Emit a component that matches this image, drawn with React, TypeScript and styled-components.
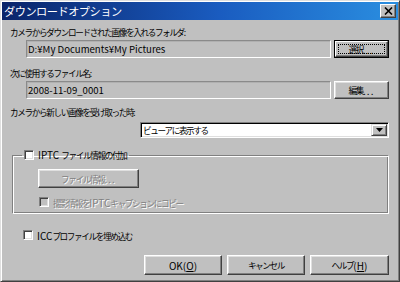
import React from "react";
import styled, { createGlobalStyle } from "styled-components";

const Global = createGlobalStyle`
  html, body { margin: 0; padding: 0; background: #c0c0c0; }
  body {
    font-family: "Noto Sans CJK JP", "Noto Sans", sans-serif;
    font-size: 8.6px;
    letter-spacing: -1.35px;
    color: #000;
  }
  * { box-sizing: border-box; }
`;

const Latin = styled.span<{ $ls?: number }>`
  font-size: 10px;
  letter-spacing: ${(p) => p.$ls ?? 0}px;
`;

const Window = styled.div`
  width: 400px;
  height: 282px;
  background: #c0c0c0;
  border: 1px solid;
  border-color: #dfdfdf #404040 #404040 #dfdfdf;
  box-shadow: inset 1px 1px #fff, inset -1px -1px #808080;
  padding: 1px;
  display: flex;
  flex-direction: column;
`;

const TitleBar = styled.div`
  height: 18px;
  background: linear-gradient(to right, #0a246a 0%, #1a5cc0 55%, #2a8ee0 100%);
  display: flex;
  align-items: center;
  justify-content: space-between;
  padding: 0 2px 0 2px;
`;

const TitleText = styled.span`
  color: #fff;
  font-size: 11.2px;
  letter-spacing: -0.5px;
  line-height: 18px;
`;

const CloseButton = styled.div`
  width: 16px;
  height: 14px;
  background: #c0c0c0;
  border: 1px solid;
  border-color: #fff #404040 #404040 #fff;
  box-shadow: inset -1px -1px #808080;
  display: flex;
  align-items: center;
  justify-content: center;
`;

const Body = styled.div`
  flex: 1;
  display: flex;
  flex-direction: column;
  padding: 6px 9px 0 8px;
`;

const Label = styled.div<{ $mt?: number }>`
  height: 12px;
  line-height: 12px;
  margin-top: ${(p) => p.$mt ?? 0}px;
  white-space: nowrap;
`;

const Row = styled.div<{ $mt?: number; $indent?: number; $h?: number }>`
  display: flex;
  align-items: stretch;
  margin-top: ${(p) => p.$mt ?? 0}px;
  padding-left: ${(p) => p.$indent ?? 16}px;
  gap: 3px;
  height: ${(p) => p.$h ?? 18}px;
`;

const Field = styled.div`
  flex: 1;
  background: #c0c0c0;
  border: 1px solid;
  border-color: #8a8a8a #fff #fff #8a8a8a;
  box-shadow: inset 1px 1px #b0b0b0;
  display: flex;
  align-items: center;
  padding-left: 1px;
  white-space: nowrap;
  font-size: 9.6px;
  letter-spacing: 0;
`;

const Button = styled.div<{ $w: number; $disabled?: boolean }>`
  width: ${(p) => p.$w}px;
  flex: none;
  background: #c0c0c0;
  border: 1px solid;
  border-color: #fff #404040 #404040 #fff;
  box-shadow: inset -1px -1px #808080, inset 1px 1px #dfdfdf;
  display: flex;
  align-items: center;
  justify-content: center;
  white-space: nowrap;
  color: ${(p) => (p.$disabled ? "#808080" : "#000")};
  text-shadow: ${(p) => (p.$disabled ? "1px 1px #fff" : "none")};
`;

const DefaultButton = styled.div<{ $w: number }>`
  width: ${(p) => p.$w}px;
  flex: none;
  border: 1px solid #000;
  display: flex;
`;

const DefaultInner = styled.div`
  flex: 1;
  background: #c0c0c0;
  border: 1px solid;
  border-color: #fff #404040 #404040 #fff;
  box-shadow: inset -1px -1px #808080;
  padding: 2px;
  display: flex;
`;

const Focus = styled.div`
  flex: 1;
  border: 1px dotted #000;
  display: flex;
  align-items: center;
  justify-content: center;
  white-space: nowrap;
`;

const ComboRow = styled.div`
  display: flex;
  justify-content: flex-end;
  margin-top: 4px;
`;

const Combo = styled.div`
  width: 249px;
  height: 16px;
  background: #fff;
  border: 1px solid;
  border-color: #808080 #fff #fff #808080;
  box-shadow: inset 1px 1px #000, inset -1px -1px #dfdfdf;
  display: flex;
  align-items: stretch;
  padding: 1px 1px 1px 2px;
`;

const ComboText = styled.div`
  flex: 1;
  display: flex;
  align-items: center;
  white-space: nowrap;
`;

const ArrowButton = styled.div`
  width: 16px;
  background: #c0c0c0;
  border: 1px solid;
  border-color: #dfdfdf #404040 #404040 #dfdfdf;
  box-shadow: inset 1px 1px #fff, inset -1px -1px #808080;
  display: flex;
  align-items: center;
  justify-content: center;
`;

const Group = styled.fieldset`
  margin: 11px 0 0 2px;
  padding: 0 0 5px 0;
  border: 1px solid;
  border-color: #808080 #fff #fff #808080;
  box-shadow: inset 1px 1px #fff, inset -1px -1px #808080;
  min-width: 0;
`;

const Legend = styled.legend`
  margin-left: 9px;
  padding: 0 2px;
  height: 12px;
  line-height: 12px;
`;

const GroupContent = styled.div`
  padding-left: 25px;
  display: flex;
  flex-direction: column;
`;

const CheckRow = styled.div<{ $mt?: number; $ml?: number; $disabled?: boolean }>`
  display: flex;
  align-items: center;
  gap: 4px;
  height: 12px;
  margin-top: ${(p) => p.$mt ?? 0}px;
  margin-left: ${(p) => p.$ml ?? 0}px;
  white-space: nowrap;
  color: ${(p) => (p.$disabled ? "#808080" : "#000")};
  text-shadow: ${(p) => (p.$disabled ? "1px 1px #fff" : "none")};
`;

const Box = styled.span<{ $disabled?: boolean }>`
  width: 10px;
  height: 10px;
  flex: none;
  background: ${(p) => (p.$disabled ? "#c0c0c0" : "#fff")};
  border: 1px solid;
  border-color: #808080 #fff #fff #808080;
  box-shadow: inset 1px 1px #404040, inset -1px -1px #dfdfdf;
`;

const ButtonBar = styled.div`
  display: flex;
  justify-content: flex-end;
  gap: 5px;
  margin-top: 14px;
  height: 20px;
`;

const Underline = styled.span`
  text-decoration: underline;
`;

export default function App() {
  return (
    <>
      <Global />
      <Window>
        <TitleBar>
          <TitleText>ダウンロードオプション</TitleText>
          <CloseButton>
            <svg width="9" height="8" viewBox="0 0 9 8">
              <path d="M1 0.5 L8 7.5 M8 0.5 L1 7.5" stroke="#000" strokeWidth="1.6" />
            </svg>
          </CloseButton>
        </TitleBar>
        <Body>
          <Label>カメラからダウンロードされた画像を入れるフォルダ:</Label>
          <Row $mt={2}>
            <Field>D:¥My Documents¥My Pictures</Field>
            <DefaultButton $w={55}>
              <DefaultInner>
                <Focus>
                  選択<Latin $ls={1}>...</Latin>
                </Focus>
              </DefaultInner>
            </DefaultButton>
          </Row>
          <Label $mt={9}>次に使用するファイル名:</Label>
          <Row $mt={2}>
            <Field>2008-11-09_0001</Field>
            <Button $w={55}>
              編集<Latin $ls={1}>...</Latin>
            </Button>
          </Row>
          <Label $mt={7}>カメラから新しい画像を受け取った時:</Label>
          <ComboRow>
            <Combo>
              <ComboText>ビューアに表示する</ComboText>
              <ArrowButton>
                <svg width="7" height="4" viewBox="0 0 7 4">
                  <path d="M0 0 H7 L3.5 4 Z" fill="#000" />
                </svg>
              </ArrowButton>
            </Combo>
          </ComboRow>
          <Group>
            <Legend>
              <CheckRow>
                <Box />
                <span>
                  <Latin>IPTC </Latin>ファイル情報の付加
                </span>
              </CheckRow>
            </Legend>
            <GroupContent>
              <Row $mt={8} $indent={0} $h={19}>
                <Button $w={101} $disabled>
                  ファイル情報<Latin $ls={1}>...</Latin>
                </Button>
              </Row>
              <CheckRow $mt={8} $ml={1} $disabled>
                <Box $disabled />
                <span>
                  撮影情報を<Latin>IPTC</Latin>キャプションにコピー
                </span>
              </CheckRow>
            </GroupContent>
          </Group>
          <CheckRow $mt={15} $ml={13}>
            <Box />
            <span>
              <Latin>ICC</Latin>プロファイルを埋め込む
            </span>
          </CheckRow>
          <ButtonBar>
            <Button $w={78}>
              <Latin>
                OK(<Underline>O</Underline>)
              </Latin>
            </Button>
            <Button $w={78}>キャンセル</Button>
            <Button $w={79}>
              ヘルプ
              <Latin>
                (<Underline>H</Underline>)
              </Latin>
            </Button>
          </ButtonBar>
        </Body>
      </Window>
    </>
  );
}
